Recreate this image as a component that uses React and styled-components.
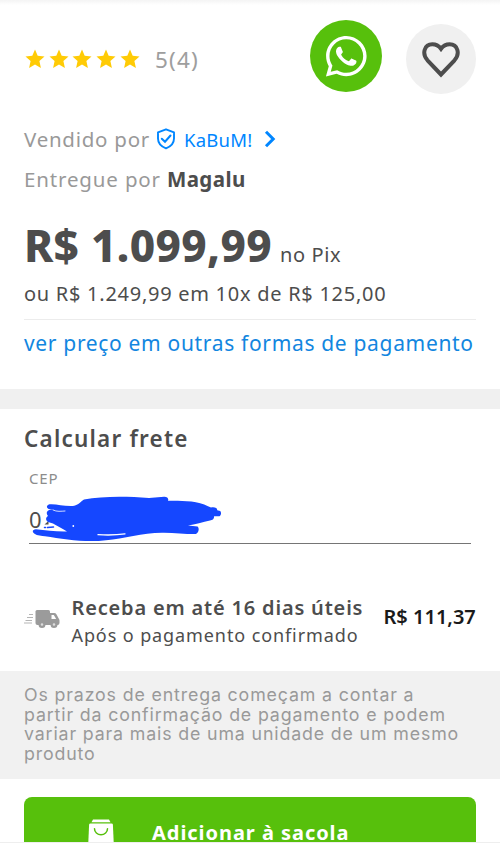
import React from "react";
import styled, { createGlobalStyle } from "styled-components";
import { FaWhatsapp } from "react-icons/fa";

const stars = [1, 2, 3, 4, 5];

export default function App() {
  return (
    <>
      <GlobalStyle />
      <Page>
        <Summary>
          <TopRow>
            <Stars>
              {stars.map((star) => (
                <StarIcon key={star} />
              ))}
            </Stars>
            <Rating>5(4)</Rating>
            <WhatsappButton aria-label="WhatsApp">
              <FaWhatsapp />
            </WhatsappButton>
            <FavoriteButton aria-label="Favoritar">
              <HeartIcon />
            </FavoriteButton>
          </TopRow>

          <SellerRow>
            <Muted $spacing="0.75px">Vendido por</Muted>
            <ShieldIcon />
            <SellerLink>KaBuM!</SellerLink>
            <ChevronIcon />
          </SellerRow>
          <SellerRow>
            <Muted $spacing="0.85px">Entregue por</Muted>
            <Store>Magalu</Store>
          </SellerRow>

          <PriceRow>
            <Price>R$ 1.099,99</Price>
            <Method>no Pix</Method>
          </PriceRow>
          <Installments>ou R$ 1.249,99 em 10x de R$ 125,00</Installments>
          <Divider />
          <PaymentLink>ver preço em outras formas de pagamento</PaymentLink>
        </Summary>

        <Band />

        <Shipping>
          <Title>Calcular frete</Title>
          <Label>CEP</Label>
          <Field>
            <Value>0</Value>
            <Scribble />
          </Field>
          <Delivery>
            <TruckIcon />
            <DeliveryInfo>
              <Deadline>Receba em até 16 dias úteis</Deadline>
              <Condition>Após o pagamento confirmado</Condition>
            </DeliveryInfo>
            <ShippingPrice>R$ 111,37</ShippingPrice>
          </Delivery>
        </Shipping>

        <Notice>
          Os prazos de entrega começam a contar a
          <br />
          partir da confirmação de pagamento e podem
          <br />
          variar para mais de uma unidade de um mesmo
          <br />
          produto
        </Notice>

        <Footer>
          <BuyButton>
            <BagIcon />
            <BuyText>Adicionar à sacola</BuyText>
          </BuyButton>
        </Footer>
      </Page>
    </>
  );
}

function StarIcon() {
  return (
    <svg width="20" height="20" viewBox="0 0 20 20">
      <path
        d="M10 .6l2.700 6.200 6.800.7-5.100 4.500 1.500 7L10 15.600l-5.900 3.400 1.500-7L.5 7.500l6.800-.7z"
        fill="#ffcb05"
      />
    </svg>
  );
}

function HeartIcon() {
  return (
    <svg width="40" height="38" viewBox="0 0 40 38">
      <path
        d="M20 34.500L6.500 20.300C.5 13.500 3.500 4.300 11.300 4.300c3.600 0 6.700 1.800 8.700 4.500 2-2.700 5.100-4.500 8.700-4.500 7.800 0 10.800 9.200 4.800 16z"
        fill="none"
        stroke="#4d4d4d"
        strokeWidth="4"
      />
    </svg>
  );
}

function ShieldIcon() {
  return (
    <svg width="20" height="22" viewBox="0 0 20 22" fill="none">
      <path
        d="M10 1.300l8 3v6.200c0 4.500-3.200 8-8 9.900-4.800-1.900-8-5.400-8-9.900V4.300z"
        stroke="#0086ff"
        strokeWidth="1.900"
        strokeLinejoin="round"
      />
      <path
        d="M5.800 10.700l3.200 3 5.500-6.200"
        stroke="#0086ff"
        strokeWidth="2"
        strokeLinecap="round"
      />
    </svg>
  );
}

function ChevronIcon() {
  return (
    <svg width="12" height="18" viewBox="0 0 12 18">
      <path
        d="M2 1.800L9.200 9 2 16.200"
        fill="none"
        stroke="#0086ff"
        strokeWidth="3"
      />
    </svg>
  );
}

function TruckIcon() {
  return (
    <Truck width="36" height="20" viewBox="0 0 36 20">
      <path
        d="M5 5.500h4M3 8.500h6M1.500 11.500h6.500M0 14h8"
        stroke="#b5b5b5"
        strokeWidth="1.200"
      />
      <g fill="#9b9b9b">
        <path d="M13 1h11.500a1.500 1.500 0 0 1 1.500 1.500V16H13.500a2 2 0 0 1-2-2V2.500A1.500 1.500 0 0 1 13 1z" />
        <path d="M26 4h4.200c1 0 1.700.4 2.200 1.200l2.300 4.300c.5.800.8 1.300.8 2V14a2 2 0 0 1-2 2H26z" />
      </g>
      <path d="M27.500 6h2.300l2.400 4h-4.700z" fill="#fff" />
      <g fill="#ddd" stroke="#9b9b9b" strokeWidth="2.200">
        <circle cx="18" cy="15.500" r="2.400" />
        <circle cx="30" cy="15.500" r="2.400" />
      </g>
    </Truck>
  );
}

function BagIcon() {
  return (
    <svg width="26" height="30" viewBox="0 0 26 30">
      <path d="M5 .5h16l1.500 2.800h-19z" fill="#fff" />
      <path d="M2.500 4.500h21q1.300 0 1.400 1.300L26 30H0L1.100 5.800q.1-1.300 1.400-1.300z" fill="#fff" />
      <path
        d="M6.500 9.800a6.500 6 0 0 0 13 0"
        fill="none"
        stroke="#57c00c"
        strokeWidth="1.500"
        strokeLinecap="round"
      />
    </svg>
  );
}

function Scribble() {
  return (
    <ScribbleSvg width="200" height="52" viewBox="28 492 200 52">
      <path d="M44.500 524.500l4-3.500v3.500z" fill="#4d4d4d" />
      <path
        d="M48 504.500c8-1 15 2 25 1.500 6-1 8-5 11-6.500 18-3.500 42-3.500 65-1.500l15-1.300c3-.2 5 1.500 4 4 12 0 29-.5 40 5.500l3 1.300c4-.8 6.500.8 6.200 2.700l3 .9c1.500 1.500.8 4.500-.7 5.100h-5.500c.5 2.500-1.300 4-4 4.300-7 1.800-15 3.800-22 5l9.500 1c2 1.500 1.500 6-1.500 7.600-10 .2-22-1.600-34-1.400-20 .3-38 6-56 7.500-20 2.500-42-1-61-4-3-.2-8-.5-10.500-2.400-3-2.100-1.800-4.500 1.500-4.600 10 1 20 2.500 31 2.200-6-3.500-10-5.500-14-7.800l-5-1.600c-3-2-2-5 0-6-2.500-3-1-5.500 2-6.200h3l-4-.8c-2.500-.8-3-3.500 0-4.500z"
        fill="#1547ff"
      />
      <path
        d="M53 510c4 2 8 1.200 12 1"
        stroke="#fff"
        strokeWidth=".8"
        strokeLinecap="round"
        fill="none"
      />
      <path
        d="M98 534.700c10 .6 18 .5 27-.8"
        stroke="#fff"
        strokeWidth="1.300"
        strokeLinecap="round"
        fill="none"
      />
      <circle cx="73.300" cy="526" r=".9" fill="#fff" />
      <path
        d="M44.500 527.400h1M47.500 527.600l6-.6"
        stroke="#1547ff"
        strokeWidth="1.500"
        strokeLinecap="round"
      />
    </ScribbleSvg>
  );
}

const GlobalStyle = createGlobalStyle`
  * {
    box-sizing: border-box;
  }

  body {
    margin: 0;
    background-color: #fff;
    font-family: "Noto Sans", sans-serif;
    color: #4d4d4d;
  }

  svg {
    display: block;
    flex-shrink: 0;
  }

  button {
    border: none;
    padding: 0;
    font-family: inherit;
    cursor: pointer;
  }
`;

const Page = styled.main`
  display: flex;
  flex-direction: column;
  width: 500px;
  height: 843px;
  overflow: hidden;
  white-space: nowrap;
  background-color: #fff;
`;

const Summary = styled.section`
  height: 389px;
  padding: 20px 24px 0;
  background: linear-gradient(#f4f4f4, #fff 5px);
`;

const TopRow = styled.div`
  display: flex;
  align-items: center;
  height: 78px;
  margin-bottom: 21px;
`;

const Stars = styled.div`
  display: flex;
  gap: 3.700px;
  margin-left: 1px;
`;

const Rating = styled.span`
  width: 155px;
  margin-left: 15.200px;
  font-size: 22.500px;
  letter-spacing: 1.200px;
  color: #9e9e9e;
`;

const RoundButton = styled.button`
  display: flex;
  align-items: center;
  justify-content: center;
  border-radius: 50%;
  flex-shrink: 0;
`;

const WhatsappButton = styled(RoundButton)`
  width: 72px;
  height: 72px;
  margin-bottom: 6px;
  background-color: #57c00c;
  color: #fff;
  font-size: 46.500px;
`;

const FavoriteButton = styled(RoundButton)`
  width: 70px;
  height: 70px;
  margin-left: 24px;
  background-color: #f0f0f0;
`;

const SellerRow = styled.div`
  display: flex;
  align-items: center;
  height: 40px;
`;

const Muted = styled.span`
  margin-right: 6px;
  font-size: 20.500px;
  letter-spacing: ${({ $spacing }) => $spacing};
  color: #999;
`;

const SellerLink = styled.a`
  margin: 0 12px 0 8px;
  font-size: 18.500px;
  letter-spacing: 0.2px;
  color: #0086ff;
`;

const Store = styled.strong`
  font-size: 20.500px;
  font-weight: 700;
  letter-spacing: 0.4px;
`;

const PriceRow = styled.div`
  display: flex;
  align-items: baseline;
  height: 60px;
  margin-top: 16px;
  line-height: 60px;
`;

const Price = styled.strong`
  font-size: 44px;
  font-weight: 800;
  letter-spacing: 0.350px;
`;

const Method = styled.span`
  margin-left: 8px;
  font-size: 20px;
  letter-spacing: 0.6px;
`;

const Installments = styled.p`
  margin: 5px 0 0;
  font-size: 20px;
  line-height: 28px;
  letter-spacing: 0.730px;
`;

const Divider = styled.hr`
  height: 1px;
  margin: 11px 0 0;
  border: none;
  background-color: #ececec;
`;

const PaymentLink = styled.a`
  display: block;
  margin-top: 8px;
  font-size: 21px;
  line-height: 30px;
  letter-spacing: 0.670px;
  color: #1286e0;
`;

const Band = styled.div`
  height: 20px;
  background-color: #f0f0f0;
`;

const Shipping = styled.section`
  height: 262px;
  padding: 15px 24px 0;
`;

const Title = styled.h2`
  margin: 0;
  font-size: 22.500px;
  font-weight: 600;
  line-height: 30px;
  letter-spacing: 1.200px;
`;

const Label = styled.label`
  display: block;
  margin: 14px 0 0 5px;
  font-size: 15px;
  line-height: 20px;
  letter-spacing: 0.8px;
  color: #8c8c8c;
`;

const Field = styled.div`
  position: relative;
  height: 56px;
  margin: 0 5px;
  padding-top: 16px;
  border-bottom: 1.500px solid #757575;
`;

const Value = styled.span`
  font-size: 22px;
  line-height: 30px;
`;

const ScribbleSvg = styled.svg`
  position: absolute;
  top: 4px;
  left: -1px;
`;

const Delivery = styled.div`
  display: flex;
  align-items: center;
  height: 56px;
  margin-top: 49px;
`;

const Truck = styled.svg`
  margin-bottom: 5px;
`;

const DeliveryInfo = styled.div`
  width: 312px;
  margin-left: 11.500px;
`;

const Deadline = styled.div`
  font-size: 20px;
  font-weight: 600;
  line-height: 28px;
  letter-spacing: 0.820px;
`;

const Condition = styled.div`
  font-size: 18px;
  line-height: 27px;
  letter-spacing: 0.9px;
`;

const ShippingPrice = styled.span`
  margin-bottom: 9px;
  font-size: 20px;
  font-weight: 600;
  color: #1a1a1a;
`;

const Notice = styled.p`
  height: 108px;
  margin: 0;
  padding: 14px 24px 0;
  font-family: Inter, "Noto Sans", sans-serif;
  font-size: 17.800px;
  line-height: 19.500px;
  letter-spacing: 0.850px;
  background-color: #f1f1f1;
  color: #999;
`;

const Footer = styled.footer`
  height: 64px;
  padding: 18px 24px 0;
  overflow: hidden;
  border-bottom: 1px solid #eee;
`;

const BuyButton = styled.button`
  display: flex;
  align-items: flex-start;
  width: 452px;
  height: 70px;
  padding: 22px 0 0 64px;
  border-radius: 8px;
  background-color: #57c00c;
`;

const BuyText = styled.span`
  margin-left: 38px;
  font-size: 20px;
  font-weight: 700;
  line-height: 28px;
  letter-spacing: 0.950px;
  color: #fff;
`;
